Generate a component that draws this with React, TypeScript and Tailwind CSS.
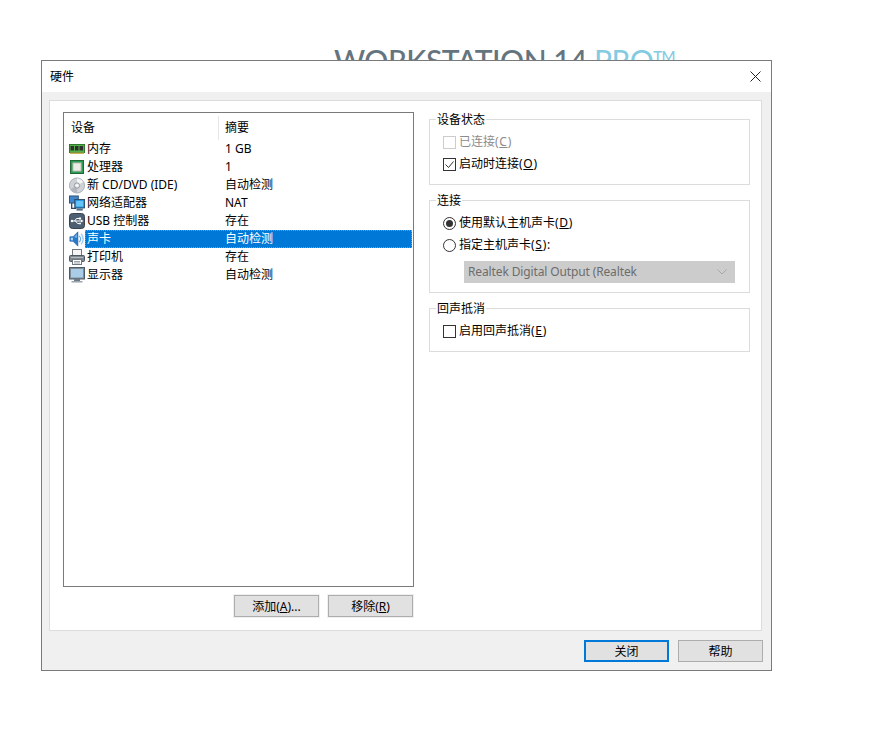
import React from 'react';

const font = "font-['Noto_Sans','Noto_Sans_CJK_SC',sans-serif]";

function RamIcon() {
  return (
    <svg width="16" height="16" viewBox="0 0 16 16">
      <rect x="0.5" y="3.5" width="15" height="8" fill="#56b04a" stroke="#2c7a2a" />
      <rect x="1.5" y="5" width="3.5" height="4.5" fill="#2f2f2f" />
      <rect x="6" y="5" width="3.5" height="4.5" fill="#2f2f2f" />
      <rect x="10.5" y="5" width="3.5" height="4.5" fill="#2f2f2f" />
      <path d="M1 11.5h14v1.5H1z" fill="#c9b458" />
    </svg>
  );
}

function CpuIcon() {
  return (
    <svg width="16" height="16" viewBox="0 0 16 16">
      <rect x="1.5" y="1.5" width="13" height="13" fill="#2f9a54" stroke="#1f6a38" />
      <rect x="4" y="4" width="8" height="8" fill="#ecece6" stroke="#c2c2ba" />
    </svg>
  );
}

function DiscIcon() {
  return (
    <svg width="17" height="17" viewBox="0 0 18 18">
      <circle cx="9" cy="9" r="8.5" fill="#cfd3d8" stroke="#a4a9af" />
      <path d="M9 1a8 8 0 0 1 7 4l-5 3a2 2 0 0 0-2-1z" fill="#f4f5f6" />
      <path d="M9 17a8 8 0 0 1-7-4l5-3a2 2 0 0 0 2 1z" fill="#b4b8be" />
      <circle cx="9" cy="9" r="3" fill="#e8eaec" stroke="#8d9298" />
      <circle cx="9" cy="9" r="1.2" fill="#ffffff" />
    </svg>
  );
}

function NetworkIcon() {
  return (
    <svg width="17" height="17" viewBox="0 0 18 18">
      <rect x="0.5" y="0.5" width="10" height="8" fill="#3f86cc" stroke="#2f4c6a" />
      <path d="M3 8.5v6h5" fill="none" stroke="#2f4c6a" strokeWidth="1.5" />
      <rect x="6.5" y="4.5" width="11" height="9.5" fill="#1e90e0" stroke="#2b4663" />
      <rect x="8" y="6" width="8" height="6.5" fill="#63c4f7" />
      <rect x="8.5" y="14.5" width="7" height="2.5" fill="#56718c" />
    </svg>
  );
}

function UsbIcon() {
  return (
    <svg width="16" height="16" viewBox="0 0 16 16">
      <rect x="0.5" y="0.5" width="15" height="15" rx="3" fill="#4d5f72" stroke="#39444f" />
      <path d="M2.5 8h10M5.5 8l2-2.5H10M6.5 8l2 2.5H10" fill="none" stroke="#ffffff" />
      <path d="M12 6.5L14.5 8 12 9.5z" fill="#ffffff" />
      <circle cx="3" cy="8" r="1.2" fill="#ffffff" />
      <rect x="10" y="4.5" width="2" height="2" fill="#ffffff" />
      <circle cx="11" cy="10.5" r="1" fill="#ffffff" />
    </svg>
  );
}

function SpeakerIcon() {
  return (
    <svg width="17" height="18" viewBox="0 0 18 18">
      <path d="M1 6.5h3.5L10 1v16l-5.5-5.5H1z" fill="#2a78c8" stroke="#1c5a9c" strokeWidth="0.7" />
      <path d="M2 7.5h2.5v3H2z" fill="#a8d4f5" />
      <path d="M5.5 7L9 3.5v4z" fill="#6fb2ea" />
      <path d="M11.5 5.5a5 5 0 0 1 0 7" fill="none" stroke="#6aaee8" strokeWidth="1.5" />
      <path d="M13.5 3a8.5 8.5 0 0 1 0 12" fill="none" stroke="#9ccbf2" strokeWidth="1.5" />
    </svg>
  );
}

function PrinterIcon() {
  return (
    <svg width="16" height="16" viewBox="0 0 16 16">
      <rect x="3.5" y="0.5" width="9" height="6" fill="#f5f5f5" stroke="#6f7780" />
      <rect x="0.5" y="6.5" width="15" height="6" rx="1" fill="#7f8790" stroke="#4f5760" />
      <path d="M2 8h12v1H2z" fill="#b4bac0" />
      <rect x="3.5" y="10.5" width="9" height="5" fill="#ffffff" stroke="#6f7780" />
      <path d="M5 12.5h6M5 14h6" stroke="#9aa1a8" />
    </svg>
  );
}

function MonitorIcon() {
  return (
    <svg width="16" height="16" viewBox="0 0 16 16">
      <rect x="0.5" y="0.5" width="15" height="11.5" fill="#7f8c99" stroke="#4f5b66" />
      <rect x="2" y="2" width="12" height="8.5" fill="#a9cde6" />
      <rect x="5" y="12" width="6" height="2" fill="#6f7a85" />
      <rect x="2.5" y="14" width="11" height="1.5" fill="#9aa4ae" />
    </svg>
  );
}

const devices = [
  { icon: <RamIcon />, name: '内存', summary: '1 GB' },
  { icon: <CpuIcon />, name: '处理器', summary: '1' },
  { icon: <DiscIcon />, name: '新 CD/DVD (IDE)', summary: '自动检测' },
  { icon: <NetworkIcon />, name: '网络适配器', summary: 'NAT' },
  { icon: <UsbIcon />, name: 'USB 控制器', summary: '存在' },
  { icon: <SpeakerIcon />, name: '声卡', summary: '自动检测', selected: true },
  { icon: <PrinterIcon />, name: '打印机', summary: '存在' },
  { icon: <MonitorIcon />, name: '显示器', summary: '自动检测' },
];

function DeviceRow({ icon, name, summary, selected }: { icon: React.ReactNode; name: string; summary: string; selected?: boolean }) {
  return (
    <div className="flex h-[18px] items-center">
      <div className="flex w-[16px] shrink-0 items-center justify-center">{icon}</div>
      <div className={`flex h-[18px] flex-1 items-center ${selected ? 'border border-dotted border-[#e8860f] bg-[#0078d7] text-white' : 'border border-transparent'}`}>
        <span className="w-[139px] shrink-0 whitespace-nowrap pl-px">{name}</span>
        <span className="whitespace-nowrap">{summary}</span>
      </div>
    </div>
  );
}

function GroupBox({ title, className, children }: { title: string; className: string; children: React.ReactNode }) {
  return (
    <fieldset className={`border border-[#dcdcdc] px-[13px] ${className}`}>
      <legend className="ml-[-7px] bg-white px-px leading-[14px]">
        <span className="block translate-y-px">{title}</span>
      </legend>
      {children}
    </fieldset>
  );
}

function Hotkey({ k }: { k: string }) {
  return (
    <span className="tracking-[0.7px]">
      (<u>{k}</u>)
    </span>
  );
}

function Check({ label, hotkey, checked, disabled }: { label: string; hotkey: string; checked?: boolean; disabled?: boolean }) {
  return (
    <div className={`flex h-[16px] items-center gap-[3px] ${disabled ? 'text-[#8c8c8c]' : ''}`}>
      <span className={`flex h-[13px] w-[13px] items-center justify-center border bg-white ${disabled ? 'border-[#cccccc]' : 'border-[#333333]'}`}>
        {checked && (
          <svg width="11" height="11" viewBox="0 0 11 11">
            <path d="M1.5 5.5L4.5 8.5L9.5 2.5" fill="none" stroke="#333333" />
          </svg>
        )}
      </span>
      <span>
        {label}
        <Hotkey k={hotkey} />
      </span>
    </div>
  );
}

function Radio({ label, hotkey, checked, colon }: { label: string; hotkey: string; checked?: boolean; colon?: boolean }) {
  return (
    <div className="flex h-[16px] items-center gap-[3px]">
      <span className="flex h-[13px] w-[13px] items-center justify-center rounded-full border border-[#333333] bg-white">
        {checked && <span className="h-[7px] w-[7px] rounded-full bg-[#333333]" />}
      </span>
      <span>
        {label}
        <Hotkey k={hotkey} />
        {colon ? ':' : ''}
      </span>
    </div>
  );
}

function Button({ children, primary }: { children: React.ReactNode; primary?: boolean }) {
  return (
    <button className={`flex h-[22px] w-[85px] items-center justify-center bg-[#e1e1e1] pt-px text-[12px] ring-1 ring-[#f0f0f0] ${primary ? 'border-2 border-[#0078d7]' : 'border border-[#adadad]'}`}>
      {children}
    </button>
  );
}

export default function App() {
  return (
    <div className={`relative h-[743px] w-[889px] overflow-hidden bg-white pl-[41px] pt-[60px] text-[12px] leading-[16px] text-black ${font}`}>
      <div className="absolute left-[334px] top-[38px] whitespace-nowrap font-['Lato',sans-serif] text-[30px] font-medium leading-[36px] tracking-[-0.5px] text-[#64757f]">
        WORKSTATION 14 <span className="font-normal text-[#84cbe2]">PRO</span>
        <span className="align-[10px] text-[15px] text-[#84cbe2]">TM</span>
      </div>

      <div className="relative h-[611px] w-[731px] border border-[#7a7a7a] bg-[#f0f0f0]">
        <div className="flex h-[31px] items-center justify-between bg-white pl-[8px] pr-[8px]">
          <span>硬件</span>
          <svg width="11" height="11" viewBox="0 0 11 11" className="mr-[2px]">
            <path d="M0.5 0.5L10.5 10.5M10.5 0.5L0.5 10.5" stroke="#222222" />
          </svg>
        </div>

        <div className="ml-[7px] mt-[8px] flex h-[531px] w-[713px] gap-[15px] border border-[#dcdcdc] bg-white pl-[13px] pt-[11px]">
          <div className="w-[351px]">
            <div className="h-[475px] w-[351px] border border-[#7a7a7a] bg-white">
              <div className="flex h-[27px] items-center pt-[3px]">
                <span className="w-[154px] pl-[7px]">设备</span>
                <span className="flex h-[24px] items-center border-l border-[#e5e5e5] pl-[6px]">摘要</span>
              </div>
              <div className="pl-[5px] pr-px">
                {devices.map((d) => (
                  <DeviceRow key={d.name} {...d} />
                ))}
              </div>
            </div>
            <div className="mr-px mt-[8px] flex justify-end gap-[9px]">
              <Button>
                添加(<u>A</u>)...
              </Button>
              <Button>
                移除(<u>R</u>)
              </Button>
            </div>
          </div>

          <div className="w-[321px]">
            <GroupBox title="设备状态" className="h-[73px]">
              <div className="flex flex-col gap-[6px] pt-[8px]">
                <Check label="已连接" hotkey="C" disabled />
                <Check label="启动时连接" hotkey="O" checked />
              </div>
            </GroupBox>
            <GroupBox title="连接" className="mt-[8px] h-[100px]">
              <div className="flex flex-col gap-[6px] pt-[8px]">
                <Radio label="使用默认主机声卡" hotkey="D" checked />
                <Radio label="指定主机声卡" hotkey="S" colon />
              </div>
              <div className="ml-[21px] mt-[8px] flex h-[22px] w-[271px] items-center justify-between border border-[#cccccc] bg-[#cccccc] pl-[3px] pr-[7px] tracking-[-0.13px] text-[#6d6d6d]">
                <span>Realtek Digital Output (Realtek</span>
                <svg width="10" height="6" viewBox="0 0 10 6">
                  <path d="M0.5 0.5L5 5L9.5 0.5" fill="none" stroke="#a8a8a8" />
                </svg>
              </div>
            </GroupBox>
            <GroupBox title="回声抵消" className="mt-[8px] h-[51px]">
              <div className="pt-[8px]">
                <Check label="启用回声抵消" hotkey="E" />
              </div>
            </GroupBox>
          </div>
        </div>

        <div className="mt-[9px] flex justify-end gap-[9px] pr-[8px]">
          <Button primary>关闭</Button>
          <Button>帮助</Button>
        </div>
      </div>
    </div>
  );
}
